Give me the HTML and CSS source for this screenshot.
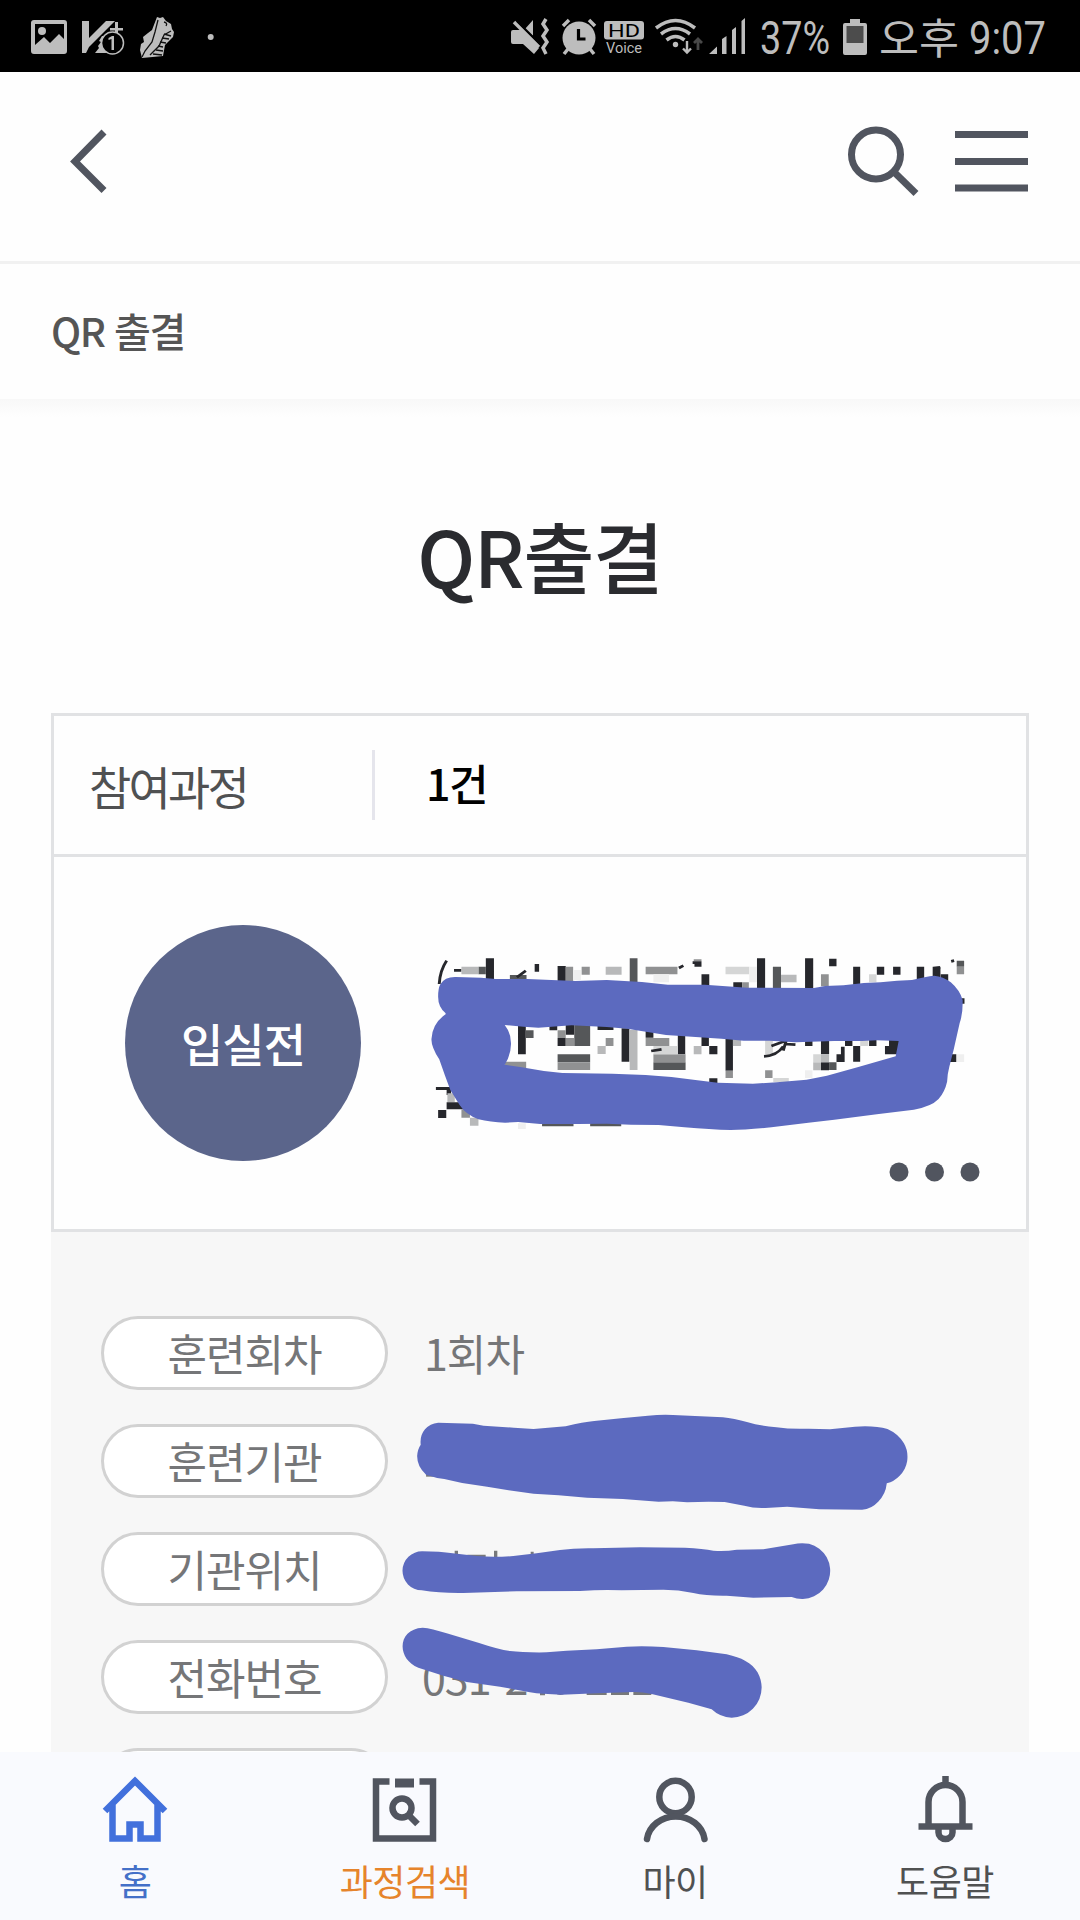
FILE: index.html
```html
<!DOCTYPE html>
<html lang="ko">
<head>
    <meta charset="UTF-8">
    <meta name="viewport" content="width=device-width, initial-scale=1.0">
    <title>QR 출결</title>
    <link rel="stylesheet" href="styles.css">
</head>
<body>
    <!-- status bar -->
    <div class="status">
        <svg width="1080" height="72" viewBox="0 0 1080 72" fill="#bdbdbd">
            <!-- gallery -->
            <path fill-rule="evenodd" d="M34 20h30q3 0 3 3v28q0 3-3 3H34q-3 0-3-3V23q0-3 3-3zM35 24v21l9-8 6 6 9-9 5 5V24z"/>
            <circle cx="42" cy="31" r="4"/>
            <!-- V1 -->
            <path d="M82 21h7v17l17-17h9L89 47v0l-3 6h-4z"/>
            <path d="M102 36l-3 5 2 1-3 4 1 2-4 5h12V36z"/>
            <path d="M115 22h3v6h5v2.500h-5V37h-3v-6.500h-5V28h5z"/>
            <circle cx="112.500" cy="43" r="11" fill="#000" stroke="#bdbdbd" stroke-width="1.500"/>
            <path d="M108.500 38l3.500-2h2v14h-2.500V39l-3 1z"/>
            <!-- shoe -->
            <path d="M157 17l3 1 3-1 3 4 5 3 1 5 2 3-1 5-8 8-2 11-21 2-2-8 1-6 3-2-1-5 5-4 4-3z"/>
            <path d="M158 20l-3 12-3 10-7 9-3 6M171 31l-7 4-5 11-9 9M164 22q4 1 2 4" fill="none" stroke="#111" stroke-width="1.300"/>
            <path d="M164 34l7 2M162 38l7 1M160 42l6 1M158 46l5 1M156 50l7 1M153 54l9 1" stroke="#111" stroke-width="1.500"/>
            <circle cx="210.700" cy="37" r="3"/>
            <!-- sound off + vibrate -->
            <path d="M513 30h8l18 18-5 6-11-10h-10q-2 0-2-2V32q0-2 2-2zM525 29l8-9v16zM528 44l6-1v11z"/>
            <path d="M514 22l25 25" stroke="#bdbdbd" stroke-width="3.500"/>
            <path d="M517 21l24 24" stroke="#000" stroke-width="2"/>
            <path d="M546 19l-3 5 4 6-4 6 4 6-4 6 3 6" fill="none" stroke="#bdbdbd" stroke-width="3.500"/>
            <!-- alarm -->
            <circle cx="579" cy="38" r="16.500"/>
            <path d="M563 26l6-6M589 20l6 6M568 49l-4 5M590 49l4 5" stroke="#bdbdbd" stroke-width="3.500"/>
            <path d="M578.500 29v10h7" fill="none" stroke="#000" stroke-width="3.200"/>
            <!-- HD voice -->
            <rect x="604" y="21" width="40" height="18.500" rx="3"/>
            <text x="608" y="36.500" class="st" font-size="17.500" fill="#000" textLength="32" lengthAdjust="spacingAndGlyphs">HD</text>
            <text x="606" y="53" class="st" font-size="15.500" textLength="36" lengthAdjust="spacingAndGlyphs">Voice</text>
            <!-- wifi -->
            <g fill="none" stroke="#bdbdbd" stroke-width="3.500">
                <path d="M656 28q19.500-15 39 0"/>
                <path d="M661 34q14.500-11 29 0"/>
                <path d="M666.500 40q9-7 18 0"/>
            </g>
            <circle cx="675.500" cy="44.500" r="2.700"/>
            <path d="M687 41v11M683 48.500l4 4 4-4" fill="none" stroke="#bdbdbd" stroke-width="2.400"/>
            <path d="M698 50V40M694 43l4-4 4 4" fill="none" stroke="#484848" stroke-width="2.800"/>
            <!-- signal -->
            <path d="M709 54l8-7.500V54zM722 39l4.500-3v18H722zM732 30l4-3v27h-4zM741.500 21l3.500-3v36h-3.500z"/>
            <text x="760" y="54" class="st" font-size="46" textLength="70" lengthAdjust="spacingAndGlyphs">37%</text>
            <!-- battery -->
            <path d="M850 19h10v4h5q2 0 2 2v28q0 2-2 2h-20q-2 0-2-2V25q0-2 2-2h5z"/>
            <path d="M846.500 26h17v17h-17z" fill="#4c4c4c"/>
            <text x="879" y="54" class="st-ko" font-size="42" textLength="80" lengthAdjust="spacingAndGlyphs">오후</text>
            <text x="969" y="54" class="st" font-size="46" textLength="77" lengthAdjust="spacingAndGlyphs">9:07</text>
        </svg>
    </div>

    <!-- header -->
    <header class="header">
        <svg class="back" width="40" height="68" viewBox="0 0 40 68"><path d="M34 5L5 34.500l29 29"/></svg>
        <svg class="search" width="74" height="74" viewBox="0 0 74 74"><circle cx="30" cy="28.500" r="24.500"/><path d="M47 45l23 22.500"/></svg>
        <svg class="menu" width="73" height="61" viewBox="0 0 73 61"><path d="M0 3.500h73M0 30.500h73M0 57h73"/></svg>
    </header>
    <div class="location">QR 출결</div>

    <main class="content">
        <h1>QR출결</h1>

        <section class="card">
            <div class="card-head">
                <span class="card-label">참여과정</span>
                <span class="card-count">1건</span>
            </div>
            <div class="card-body">
                <div class="state">입실전</div>
                <svg class="course" width="580" height="230" viewBox="0 0 1568 690" preserveAspectRatio="none">
                    <!-- pixelated course name -->
                    <path fill="#26272c" d="M178 115h22v64h-22zM372 138h22v46h-22zM911 115h22v92h-22zM1041 115h22v92h-22zM1106 116h20v23h-20zM761 163h21v36h-21zM847 187h24v20h-24zM1171 140h19v54h-19zM1235 140h20v24h-20zM1279 140h20v24h-20zM1343 140h20v45h-20zM1386 140h21v32h-21zM1408 163h20v20h-20zM310 132h12v23h-12zM92 147h20v8h-20z"/>
                    <path fill="#26272c" d="M265 315h21v88h-21zM350 310h21v21h-21zM394 310h23v34h-23zM372 354h22v24h-22zM480 315h43v15h-43zM545 325h21v100h-21zM697 340h20v63h-20zM761 345h20v33h-20zM782 378h22v25h-22zM826 350h20v102h-20zM610 330h21v23h-21zM1041 355h20v23h-20zM1084 355h22v48h-22zM1126 403h22v23h-22zM1138 380h10v23h-10zM1171 378h19v47h-19zM1214 355h20v23h-20zM1257 378h36v25h-36zM1268 360h28v20h-28zM1149 355h20v23h-20zM1084 427h22v24h-22zM782 475h22v20h-22z"/>
                    <path fill="#26272c" d="M43 501h50v9H43zM72 510h12v15H72zM72 547h60v21H72zM49 570h22v24H49zM1425 403h25v23h-25zM1460 235h12v16h-12z"/>
                    <path fill="#555759" d="M567 115h21v73h-21zM954 140h22v66h-22zM1451 122h20v18h-20zM158 140h20v23h-20zM286 331h21v23h-21zM417 315h43v63h-43zM372 403h65v24h-65zM631 427h87v23h-87zM1106 427h20v23h-20zM330 605h85v14h-85zM460 605h84v14h-84zM437 403h23v24h-23zM243 165h45v15h-45z"/>
                    <path fill="#909192" d="M394 140h20v43h-20zM437 140h22v24h-22zM610 140h86v23h-86zM1084 163h21v36h-21zM1451 140h20v23h-20zM372 331h22v23h-22zM394 354h23v24h-23zM372 427h88v23h-88zM502 354h21v24h-21zM610 354h64v24h-64zM631 403h87v24h-87zM826 452h20v22h-20zM933 451h20v23h-20zM229 425h58v20h-58zM112 568h23v25h-23zM740 118h21v6h-21zM871 187h18v18h-18z"/>
                    <path fill="#b8b9ba" d="M112 140h46v23h-46zM502 140h43v24h-43zM976 164h42v23h-42zM480 378h22v24h-22zM567 330h21v120h-21zM740 378h21v25h-21zM846 350h22v28h-22zM1063 427h21v24h-21zM1084 403h22v24h-22zM135 593h23v24h-23zM74 520h20v26H74z"/>
                    <path fill="#d5d6d6" d="M826 140h64v23h-64zM1214 163h20v24h-20zM631 378h66v25h-66zM933 360h21v43h-21zM1063 403h21v24h-21zM1190 350h22v28h-22zM955 474h42v12h-42z"/>
                    <path fill="#efefef" d="M890 140h21v47h-21zM631 163h42v24h-42zM415 150h20v30h-20zM1041 451h20v23h-20zM1451 403h20v23h-20zM265 610h21v17h-21z"/>
                    <path d="M72 122q-18 30-20 70M930 409q35-2 52-30M950 378l35-14M985 372l30 2M990 362l-8 30M625 393l28-5M700 144l12-7M737 128h20v8h-15M1388 145l18-3M1436 124l8-2M262 172l24-20" fill="none" stroke="#26272c" stroke-width="8"/>
                    <!-- marker -->
                    <path class="marker" fill-rule="evenodd" d="M68 278Q49 260 49 230Q49 205 55 193Q67 170 97 171L165 173L205 177L290 177L420 183L505 180L600 186L670 194L770 194L885 203L1065 204L1095 198L1145 196L1200 189L1245 187L1290 182L1330 180Q1368 169 1390 167Q1414 169 1435 187Q1459 210 1467 240Q1468 280 1459 309L1443 388L1431 440Q1426 460 1425 485Q1419 515 1402 537Q1382 560 1335 569L1235 583L1120 599L1050 608L950 622Q880 630 840 630Q785 629 715 622L645 615L570 614L505 611L425 612L325 612L265 606L230 608Q190 607 158 598Q124 584 107 555L82 510L67 465L52 418Q30 380 31 357Q33 310 70 282ZM229 315Q247 340 246 373Q246 404 229 434L275 442L335 453L385 459L520 461L610 465L680 471L750 481L805 488L900 491L965 487L1045 479L1100 467L1185 441L1286 409L1294 363L1235 361L1195 363L1120 363L1015 367L945 362L875 362L815 356L715 349L665 345L615 336L560 326L505 321L410 316L320 323L280 320Z"/>
                </svg>
                <svg class="more" width="91" height="20" viewBox="0 0 91 20"><circle cx="10" cy="10" r="9.500"/><circle cx="45.500" cy="10" r="9.500"/><circle cx="81" cy="10" r="9.500"/></svg>
            </div>
        </section>

        <section class="detail">
            <div class="row"><span class="pill">훈련회차</span><span class="value">1회차</span></div>
            <div class="row">
                <span class="pill">훈련기관</span>
                <svg class="scribble scribble-org" width="560" height="220" viewBox="0 0 1568 660" preserveAspectRatio="none">
                    <path d="M129 520h25v10h-25z" fill="#77787a"/>
                    <path class="marker" d="M114 434Q111 407 126 388Q140 370 163 368L260 371L290 377L375 383L430 387L520 379Q570 366 600 363L675 355L750 347Q790 343 820 345L960 352Q990 355 1030 367Q1060 377 1110 382Q1150 388 1200 386L1260 388L1330 380Q1385 376 1421 387Q1452 402 1467 430Q1480 454 1476 484Q1472 510 1455 527Q1440 544 1419 550Q1416 583 1395 605Q1376 627 1350 629L1230 628L1140 620L1080 624Q1048 626 1020 617L965 606L920 605L860 607L820 604L780 605L680 597L580 593L500 586L430 581L360 571L300 560L230 549L180 537L160 534L129 524Q104 500 104 468Q105 448 114 434Z"/>
                </svg>
            </div>
            <div class="row">
                <span class="pill">기관위치</span>
                <svg class="scribble scribble-place" width="480" height="94" viewBox="0 0 1440 282">
                    <path d="M224 92h10v25h-10zM262 104h55v13h-55zM342 92h10v30h-10zM452 95h9v12h-9z" fill="#77787a"/>
                    <path class="marker" d="M127 94Q180 94 218 100L290 108Q340 113 400 108L470 100L540 90Q585 84 640 85L780 82L915 83Q970 86 1000 92Q1035 95 1070 89L1150 88L1240 73Q1260 67 1287 71A84.300 84.300 0 1 1 1235 231L1120 233L1040 227Q980 228 940 219Q895 209 850 209L725 211Q670 208 600 213L410 214L250 219Q180 220 125 211A58 58 0 0 1 127 94Z"/>
                </svg>
            </div>
            <div class="row">
                <span class="pill">전화번호</span><span class="value phone">031-2</span>
                <svg class="scribble scribble-phone" width="480" height="110" viewBox="0 300 1440 330">
                    <path d="M480 515h15v11h-15zM525 518q15 14 33 0zM620 510h60v15h-60zM693 510h54v15h-54zM760 510h54v15h-54z" fill="#77787a"/>
                    <path class="marker" d="M128 323Q155 325 200 340L295 368Q355 388 390 393Q430 398 500 397L560 392L650 388L740 380Q790 377 850 381L950 391L1040 403Q1075 411 1095 422C1130 440 1145 472 1145 502A90 91 0 0 1 1055 593Q1020 592 995 568L925 548L815 522Q780 514 740 517L650 520L545 524Q485 523 450 517L360 500L260 486L190 467L115 443C50 418 50 327 128 323Z"/>
                </svg>
            </div>
            <div class="row"><span class="pill"></span></div>
        </section>
    </main>

    <!-- bottom menu -->
    <nav class="tabs">
        <a class="tab home">
            <svg width="66" height="72" viewBox="0 0 66 72"><path d="M3 38L33 8l30 30M10.500 32v33.500h17v-14h11v14h17V32"/></svg>
            홈
        </a>
        <a class="tab find">
            <svg width="66" height="72" viewBox="0 0 66 72"><path d="M17.500 8.500H4v57h57v-57H47.500"/><path d="M23 10h19" stroke-width="9"/><circle cx="30" cy="35" r="9.500"/><path d="M36.500 42l9 9"/></svg>
            과정검색
        </a>
        <a class="tab">
            <svg width="66" height="72" viewBox="0 0 66 72"><circle cx="33.500" cy="24" r="16.200"/><path stroke-linecap="round" d="M5 66a29 26 0 0 1 57.500 0"/></svg>
            마이
        </a>
        <a class="tab">
            <svg width="66" height="72" viewBox="0 0 66 72"><path d="M33.500 3v9M16.500 52V29a17 17 0 0 1 34 0v23M6.500 53.500h54M26.500 55v4.500a7 6.500 0 0 0 14 0V55"/></svg>
            도움말
        </a>
    </nav>
</body>
</html>
```

FILE: styles.css
```css
* {
    box-sizing: border-box;
}

body {
    display: flex;
    flex-direction: column;
    width: 1080px;
    height: 1920px;
    margin: 0;
    overflow: hidden;
    background-color: #fefefe;
    font-family: "Noto Sans CJK KR", "Noto Sans", sans-serif;
}

svg {
    display: block;
    flex: none;
}

.status {
    height: 72px;
    flex: none;
    background-color: #000000;
}

.st {
    font-family: Roboto, sans-serif;
}

.st-ko {
    font-family: "Noto Sans CJK KR", sans-serif;
}

/* header */
.header {
    display: flex;
    align-items: flex-start;
    flex: none;
    height: 192px;
    padding: 54px 52px 0 70px;
    border-bottom: 3px solid #f1f1f1;
}

.header svg {
    fill: none;
    stroke: #51555f;
    stroke-width: 7;
}

.back {
    margin: 1px auto 0 0;
}

.search {
    margin-right: 35px;
}

.menu {
    margin-top: 5px;
}

.location {
    flex: none;
    height: 135px;
    padding-left: 51px;
    font-size: 40px;
    font-weight: 500;
    line-height: 133px;
    letter-spacing: -1.500px;
    color: #555555;
}

/* content */
.content {
    flex: 1;
    min-height: 0;
    overflow: hidden;
    padding: 0 51px;
    background: linear-gradient(#f8f8f8, #fefefe 18px);
}

h1 {
    height: 314px;
    margin: 0;
    text-align: center;
    font-size: 77px;
    font-weight: 500;
    line-height: 311px;
    letter-spacing: -1.200px;
    color: #2a2b2f;
}

.card {
    height: 519px;
    border: 3px solid #e1e2e4;
}

.card-head {
    display: flex;
    align-items: center;
    height: 141px;
    border-bottom: 3px solid #e1e2e4;
}

.card-label {
    width: 321px;
    height: 70px;
    padding-left: 35px;
    border-right: 3px solid #e5e5ec;
    font-size: 46px;
    line-height: 70px;
    letter-spacing: -2.800px;
    color: #505152;
}

.card-count {
    height: 70px;
    padding-left: 51px;
    font-size: 43px;
    font-weight: 500;
    line-height: 64px;
    letter-spacing: -1.500px;
    color: #000000;
}

.card-body {
    position: relative;
    height: 372px;
    padding: 68px 0 0 71px;
}

.state {
    width: 236px;
    height: 236px;
    border-radius: 50%;
    background-color: #5b658b;
    font-size: 46px;
    font-weight: 500;
    line-height: 235px;
    letter-spacing: -1px;
    text-align: center;
    color: #ffffff;
}

.course {
    position: absolute;
    top: 63px;
    left: 366px;
}

.marker {
    fill: #5c6abf;
}

.more {
    position: absolute;
    right: 46px;
    bottom: 47px;
    fill: #51555f;
}

/* training info */
.detail {
    display: flex;
    flex-direction: column;
    gap: 34px;
    height: 700px;
    padding: 84px 50px 0;
    background-color: #f7f7f7;
}

.row {
    position: relative;
    display: flex;
    align-items: center;
    flex: none;
    height: 74px;
}

.pill {
    width: 287px;
    height: 74px;
    border: 3px solid #d2d2d2;
    border-radius: 37px;
    background-color: #ffffff;
    font-size: 43px;
    line-height: 67px;
    letter-spacing: -1px;
    text-align: center;
    color: #757678;
}

.value {
    height: 70px;
    margin-left: 36px;
    font-size: 43px;
    line-height: 69px;
    letter-spacing: -1px;
    color: #757678;
}

.phone {
    margin-left: 34px;
}

.scribble {
    position: absolute;
    left: 279px;
}

.scribble-org {
    top: -124px;
}

.scribble-place {
    top: -12px;
}

.scribble-phone {
    top: -20px;
}

/* bottom menu */
.tabs {
    display: flex;
    flex: none;
    height: 168px;
    padding-top: 21px;
    background-color: #f9fafe;
}

.tab {
    display: flex;
    flex-direction: column;
    align-items: center;
    width: 270px;
    font-size: 36px;
    line-height: 70px;
    letter-spacing: -0.500px;
    color: #505152;
}

.tab svg {
    fill: none;
    stroke: #51555f;
    stroke-width: 6.500;
}

.home {
    color: #4470c8;
}

.home svg {
    stroke: #4270dc;
}

.find {
    color: #e6842c;
}
```
